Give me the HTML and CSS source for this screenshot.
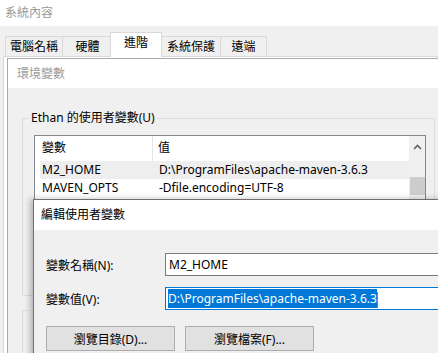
FILE: index.html
```html
<!DOCTYPE html>
<html lang="zh-Hant">
<head>
    <meta charset="UTF-8">
    <meta name="viewport" content="width=device-width, initial-scale=1.0">
    <title>系統內容</title>
    <link rel="stylesheet" href="styles.css">
</head>
<body>
    <div class="desktop">
        <!-- back window: system properties -->
        <div class="win sysprops">
            <div class="titlebar inactive">系統內容</div>
            <div class="tabs">
                <span class="tab w57">電腦名稱</span>
                <span class="tab w50">硬體</span>
                <span class="tab selected">進階</span>
                <span class="tab w59">系統保護</span>
                <span class="tab w46">遠端</span>
            </div>
            <div class="tabpanel"></div>
        </div>

        <!-- middle window: environment variables -->
        <div class="win envvars">
            <div class="titlebar inactive">環境變數</div>
            <div class="envbody">
                <div class="groupbox user">
                    <span class="legend">Ethan 的使用者變數(U)</span>
                    <div class="listview">
                        <div class="listcols">
                            <div class="header">
                                <span class="col name">變數</span>
                                <span class="col value">值</span>
                            </div>
                            <div class="row hover">
                                <span class="col name">M2_HOME</span>
                                <span class="col value">D:\ProgramFiles\apache-maven-3.6.3</span>
                            </div>
                            <div class="row">
                                <span class="col name">MAVEN_OPTS</span>
                                <span class="col value">-Dfile.encoding=UTF-8</span>
                            </div>
                        </div>
                        <div class="scrollbar">
                            <svg class="arrow" width="9" height="6" viewBox="0 0 9 6">
                                <path d="M1 5 L4.5 1.5 L8 5" fill="none" stroke="#606060" stroke-width="1.6"/>
                            </svg>
                            <div class="thumb"></div>
                        </div>
                    </div>
                </div>
                <!-- system variables group, hidden behind the edit dialog -->
                <div class="groupbox system">
                    <span class="legend stub"></span>
                </div>
            </div>
        </div>

        <!-- front window: edit user variable -->
        <div class="win editvar">
            <div class="titlebar">編輯使用者變數</div>
            <div class="editbody">
                <div class="form">
                    <label>變數名稱(N):</label>
                    <div class="field">M2_HOME</div>
                    <label>變數值(V):</label>
                    <div class="field focused"><span class="sel">D:\ProgramFiles\apache-maven-3.6.3</span><span class="caret"></span></div>
                </div>
                <div class="buttons">
                    <button>瀏覽目錄(D)...</button>
                    <button>瀏覽檔案(F)...</button>
                </div>
            </div>
        </div>
    </div>
</body>
</html>
```

FILE: styles.css
```css
body {
    margin: 0;
    background: #ffffff;
    font-family: "Noto Sans", "Noto Sans CJK TC", sans-serif;
    font-size: 12px;
    color: #000000;
}
.desktop {
    position: relative;
    width: 438px;
    height: 353px;
    overflow: hidden;
}
.win {
    position: absolute;
    background: #f0f0f0;
}
.titlebar {
    background: #ffffff;
    line-height: 26px;
    height: 26px;
    padding-left: 5px;
}
.titlebar.inactive {
    color: #9a9a9a;
}

/* system properties */
.sysprops {
    left: 0;
    top: 0;
    width: 438px;
    height: 353px;
}
.tabs {
    display: flex;
    align-items: flex-end;
    height: 30px;
    padding-left: 5px;
}
.tab {
    height: 19px;
    line-height: 19px;
    text-align: center;
    border: 1px solid #d9d9d9;
    border-bottom: none;
    margin-right: -1px;
    background: #f0f0f0;
}
.w57 { width: 56px; }
.w50 { width: 49px; }
.w59 { width: 58px; }
.w46 { width: 45px; }
.tab.selected {
    width: 50px;
    height: 24px;
    line-height: 20px;
    background: #ffffff;
    margin: 0 -1px 0 -2px;
    position: relative;
    z-index: 1;
    margin-bottom: -1px;
}
.tabpanel {
    margin-left: 3px;
    height: 300px;
    border: 1px solid #d9d9d9;
    background: #ffffff;
}

/* environment variables */
.envvars {
    left: 7px;
    top: 58px;
    width: 460px;
    height: 320px;
    border: 1px solid #aaaaaa;
}
.envvars .titlebar {
    height: 29px;
    line-height: 29px;
    padding-left: 9px;
}
.envbody {
    padding: 30px 0 0 14px;
}
.groupbox {
    position: relative;
    border: 1px solid #dcdcdc;
    width: 413px;
}
.groupbox.user {
    height: 178px;
    padding: 16px 0 0 11px;
    box-sizing: border-box;
}
.groupbox.system {
    margin-top: 14px;
    height: 60px;
}
.legend {
    position: absolute;
    left: 6px;
    top: -9px;
    padding: 0 2px;
    line-height: 16px;
    background: #f0f0f0;
}
.legend.stub {
    width: 60px;
    height: 16px;
    padding: 0;
}
.listview {
    display: flex;
    width: 390px;
    height: 200px;
    border: 1px solid #828790;
    background: #ffffff;
}
.listcols {
    flex: 1;
}
.header {
    display: flex;
    height: 25px;
    line-height: 23px;
}
.header .col.name {
    border-right: 1px solid #e5e5e5;
}
.row {
    display: flex;
    height: 18px;
    line-height: 18px;
    margin-left: 5px;
}
.row .col.name {
    width: 112px;
    padding-left: 2px;
}
.header .col.name {
    width: 110px;
    padding-left: 7px;
}
.col.value {
    padding-left: 5px;
}
.row.hover {
    background: #eeeeee;
}
.scrollbar {
    width: 16px;
    background: #f0f0f0;
    display: flex;
    flex-direction: column;
    align-items: center;
}
.arrow {
    margin-top: 8px;
}
.thumb {
    width: 15px;
    height: 18px;
    margin-top: 27px;
    background: #cdcdcd;
}

/* edit user variable */
.editvar {
    left: 33px;
    top: 199px;
    width: 460px;
    height: 200px;
    border: 1px solid #6f6f6f;
    box-shadow: -3px 0 6px rgba(0, 0, 0, 0.25);
}
.editvar .titlebar {
    height: 30px;
    line-height: 29px;
    padding-left: 7px;
}
.editbody {
    padding: 23px 0 0 12px;
}
.form {
    display: grid;
    grid-template-columns: 119px 1fr;
    row-gap: 11px;
    align-items: center;
}
.field {
    height: 21px;
    line-height: 21px;
    border: 1px solid #7a7a7a;
    background: #ffffff;
    padding-left: 3px;
    white-space: nowrap;
}
.field.focused {
    border-color: #0078d7;
    padding-left: 2px;
}
.sel {
    background: #0078d7;
    color: #ffffff;
    padding: 1px 0;
}
.caret {
    display: inline-block;
    width: 1px;
    height: 16px;
    vertical-align: middle;
    background: #d06a20;
}
.buttons {
    display: flex;
    gap: 10px;
    margin-top: 16px;
}
button {
    width: 129px;
    height: 25px;
    background: #e1e1e1;
    border: 1px solid #adadad;
    font-family: "Noto Sans", "Noto Sans CJK TC", sans-serif;
    font-size: 12px;
    color: #000000;
    padding: 0;
}
```
